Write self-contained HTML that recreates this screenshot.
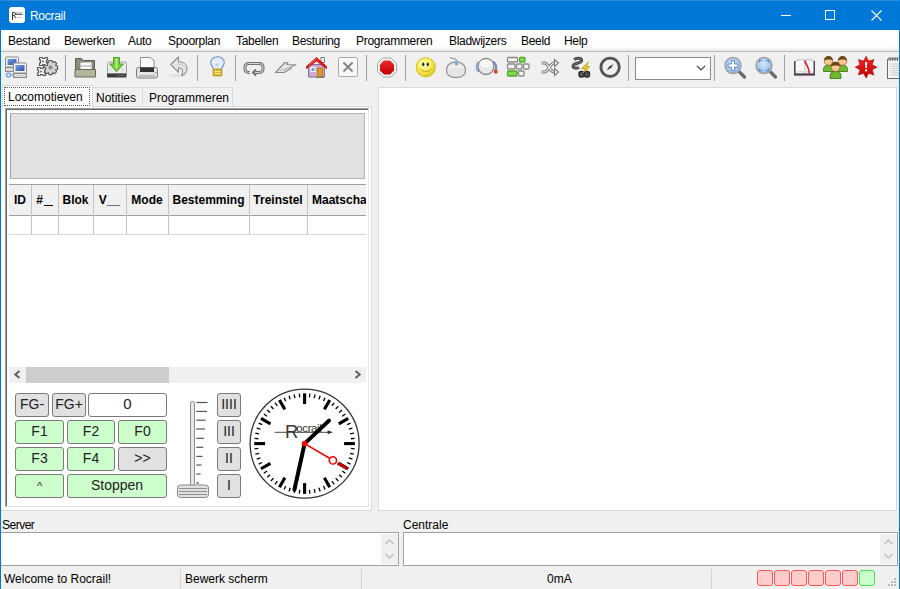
<!DOCTYPE html>
<html><head><meta charset="utf-8">
<style>
*{margin:0;padding:0;box-sizing:border-box}
html,body{width:900px;height:589px;overflow:hidden;background:#f0f0f0;font-family:"Liberation Sans",sans-serif;font-size:12px;color:#000}
.a{position:absolute}
.t{white-space:nowrap}
#title{left:0;top:0;width:900px;height:30px;background:#0078d7}
#menu{left:1px;top:30px;width:898px;height:22px;background:linear-gradient(#fff 0,#fff 17px,#e6e6e6 21px);border-bottom:1px solid #bdbdbd}
#menu span{position:absolute;top:4px;letter-spacing:-0.3px}
.sep{position:absolute;top:55px;width:1px;height:26px;background:#a0a0a0}
.btn{position:absolute;border:1px solid #7a7a7a;border-radius:3px;background:#ccffcc;text-align:center;font-size:14px;color:#222}
.gr{background:#e1e1e1}
.rb{position:absolute;border:1px solid #888;border-radius:3px;background:#e1e1e1}
.led{position:absolute;top:570px;width:16px;height:16px;border-radius:3px;background:#ffcccc;border:1px solid #ff5a5a}
</style></head><body>
<!-- window border -->
<div id="title" class="a">
  <div class="a" style="left:0;top:0;width:900px;height:1px;background:#2a8ad8"></div>
  <div class="a" style="left:9px;top:7px;width:16px;height:16px;background:#fff;border-radius:3px"></div>
  <svg class="a" style="left:9px;top:7px" width="16" height="16"><path d="M3.5 5.5v7.5M3.5 5.5h2c1.3 0 1.3 2.8 0 2.8h-2M5.2 8.3l1.3 2.7" fill="none" stroke="#222" stroke-width="0.9"/><path d="M6.5 6h1.5M8.6 6h1.2M10.3 6h1.2M12 6h1.2M6.5 7.5h7" stroke="#333" stroke-width="0.8"/><path d="M7.5 10.5h5.5" stroke="#aaa" stroke-width="0.6"/></svg>
  <div class="a t" style="left:30px;top:9px;color:#fff;font-size:12px;letter-spacing:-0.3px">Rocrail</div>
  <div class="a" style="left:781px;top:15px;width:10px;height:1px;background:#fff"></div>
  <div class="a" style="left:825px;top:10px;width:10px;height:10px;border:1px solid #fff"></div>
  <svg class="a" style="left:871px;top:10px" width="11" height="11"><path d="M0.5 0.5L10.5 10.5M10.5 0.5L0.5 10.5" stroke="#fff" stroke-width="1.1"/></svg>
</div>
<div id="menu" class="a">
  <span style="left:7px">Bestand</span>
  <span style="left:63px">Bewerken</span>
  <span style="left:127px">Auto</span>
  <span style="left:167px">Spoorplan</span>
  <span style="left:235px">Tabellen</span>
  <span style="left:291px">Besturing</span>
  <span style="left:355px">Programmeren</span>
  <span style="left:448px">Bladwijzers</span>
  <span style="left:520px">Beeld</span>
  <span style="left:563px">Help</span>
</div>
<svg class="a" style="left:0;top:0" width="900" height="90" viewBox="0 0 900 90">
<defs>
<linearGradient id="gscr" x1="0" y1="0" x2="1" y2="1"><stop offset="0" stop-color="#7aa0e0"/><stop offset="1" stop-color="#2850b0"/></linearGradient>
<radialGradient id="gsm" cx="0.4" cy="0.35" r="0.7"><stop offset="0" stop-color="#ffffc0"/><stop offset="0.6" stop-color="#f5e84a"/><stop offset="1" stop-color="#d8c020"/></radialGradient>
<radialGradient id="glens" cx="0.45" cy="0.4" r="0.6"><stop offset="0" stop-color="#d8e8fa"/><stop offset="1" stop-color="#8ab4e8"/></radialGradient>
<linearGradient id="gred" x1="0" y1="0" x2="0" y2="1"><stop offset="0" stop-color="#f02828"/><stop offset="1" stop-color="#c00000"/></linearGradient>
</defs>
<!-- 1 network -->
<rect x="5.5" y="57" width="13" height="10" rx="1" fill="#f4f4f4" stroke="#8a8a8a"/>
<rect x="7.5" y="59" width="9" height="6" fill="url(#gscr)"/>
<rect x="5.5" y="67.5" width="8" height="4" fill="#d8d8d8" stroke="#8a8a8a"/>
<rect x="13.5" y="63" width="13" height="10" rx="1" fill="#f4f4f4" stroke="#8a8a8a"/>
<rect x="15.5" y="65" width="9" height="6" fill="url(#gscr)"/>
<rect x="13.5" y="73.5" width="13" height="4" fill="#d8d8d8" stroke="#8a8a8a"/>
<circle cx="8.5" cy="75" r="2" fill="none" stroke="#7aa8e8" stroke-width="1.5"/>
<path d="M10.5 75H13.5" stroke="#7aa8e8" stroke-width="1.5"/>
<!-- 2 gears -->
<g stroke="#5a5a5a" stroke-width="1.2" stroke-linejoin="round">
<path d="M49 60.5h3l0.6 2 2-1 2 2-1 2 2 0.6v3l-2 0.6 1 2-2 2-2-1-0.6 2h-3l-0.6-2-2 1-2-2 1-2-2-0.6v-3l2-0.6-1-2 2-2 2 1z" fill="#d4d4d4"/>
<path d="M39.5 57.5h3v1h2.5v-1h2.5v2.5h-1v3h1v2.5h-2.5v-1h-2.5v1h-3v-2.5h1v-3h-1z" fill="#f4f4f4"/>
<path d="M37.5 67.5h3v1h2.5v-1h2.5v2.5h-1v3h1v2.5h-2.5v-1h-2.5v1h-3v-2.5h1v-3h-1z" fill="#f4f4f4"/>
</g>
<circle cx="43" cy="61.5" r="1.1" fill="#777"/><circle cx="41" cy="71.5" r="1.1" fill="#777"/><circle cx="50.5" cy="67.5" r="1.7" fill="#999" stroke="#666" stroke-width="0.6"/>
<!-- 3 folder -->
<path d="M75.5 58.5h6l2 2h11v16h-19z" fill="#8c8c7a" stroke="#5e5e50"/>
<rect x="80.5" y="62.5" width="11" height="7" fill="#fafafa"/>
<rect x="81" y="65" width="10" height="2" fill="#d0d0d0"/>
<path d="M75 69.5h20.5v7.5h-20.5z" fill="#b4b49c" stroke="#6a6a5a"/>
<!-- 4 download -->
<path d="M108.5 62h17l1 2.5v9.5h-19v-9.5z" fill="#ececec" stroke="#a0a0a0"/>
<path d="M109 70.5l3-1.5M124 70.5l-3-1.5" stroke="#c8c8c8" stroke-width="0.8"/>
<rect x="107" y="73.5" width="19.5" height="4" rx="0.8" fill="#3c3c3c"/>
<path d="M117 75.5h8" stroke="#777" stroke-width="0.8"/>
<path d="M113.5 57.5h6v6.5h3.8l-6.8 7.8-6.8-7.8h3.8z" fill="#7ad03a" stroke="#4a9a18" stroke-width="0.9"/>
<path d="M116.5 58.5v10" stroke="#c8f4a0" stroke-width="1.5"/>
<!-- 5 printer -->
<path d="M140.5 57.5h10l3.5 3.5v8h-13.5z" fill="#fafafa" stroke="#909090"/>
<rect x="136.5" y="67.5" width="21" height="10.5" rx="2" fill="#e4e4e4" stroke="#7a7a7a"/>
<rect x="140" y="67.5" width="14" height="4.5" fill="#333"/>
<rect x="139" y="75" width="16" height="2.5" fill="#bbb"/>
<rect x="155" y="72" width="1.5" height="1.5" fill="#6c3"/>
<!-- 6 undo -->
<ellipse cx="177" cy="75.5" rx="8" ry="1.8" fill="#000" opacity="0.06"/>
<path d="M170.8 64.5L178.5 57V61.8C184 61.8 187 64.8 187 68.8C187 72 184.8 74.5 181.5 75.5C182.8 73.5 183 71.8 182.3 70C181.5 68.3 180 67.5 178.5 67.8V72.3Z" fill="#e6e6e6" stroke="#8c8c8c" stroke-width="1.1" stroke-linejoin="round"/>
<path d="M175 64.5C179 63.5 183 64 185 68" fill="none" stroke="#d0d0d0" stroke-width="1.2"/>
<!-- 7 bulb -->
<path d="M213.5 69.5c0-2.5-2.8-4-2.8-7a6.8 5.8 0 0 1 13.6 0c0 3-2.8 4.5-2.8 7z" fill="#e4eef9" stroke="#6a90cc" stroke-width="1.1"/>
<path d="M215 66l2.5-2.5v3" fill="none" stroke="#9ab4dc" stroke-width="0.7"/>
<rect x="213" y="69" width="9" height="7" rx="1" fill="#d6b632" stroke="#b09020" stroke-width="0.8"/>
<path d="M214 71.5h7M214 73.5h7" stroke="#f6e8a0" stroke-width="0.8"/>
<!-- 8 loop -->
<path d="M250 72.5h-1.5a3.5 3.5 0 0 1-3.5-3.5v-2a3.5 3.5 0 0 1 3.5-3.5h11a3.5 3.5 0 0 1 3.5 3.5v2a3.5 3.5 0 0 1-3.5 3.5h-4" fill="none" stroke="#707070" stroke-width="3"/>
<path d="M250 72.5h-1.5a3.5 3.5 0 0 1-3.5-3.5v-2a3.5 3.5 0 0 1 3.5-3.5h11a3.5 3.5 0 0 1 3.5 3.5v2a3.5 3.5 0 0 1-3.5 3.5h-4" fill="none" stroke="#d8d8d8" stroke-width="1"/>
<path d="M256 69.5l-3 3 3 3" fill="none" stroke="#707070" stroke-width="2"/>
<!-- 9 plane -->
<path d="M275.5 72.5L285 62.5L288 62.8L287 64.5L296 64.8L290 67.5L291 68.5L284 72.5Z" fill="#e8e8e8" stroke="#8c8c8c" stroke-width="1.2" stroke-linejoin="round"/>
<path d="M279 71L295 65.5M283 70.5l6-2.5" stroke="#b4b4b4" stroke-width="0.8"/>
<!-- 10 house -->
<rect x="321" y="57.5" width="3.5" height="5" fill="#f4f4f4" stroke="#555" stroke-width="0.7"/>
<path d="M308.5 64.5h16v12.5h-16z" fill="#c8aad2" stroke="#8a6aa2"/>
<path d="M306.5 66.5L316.5 57.5L326.5 66.5L326.5 68.5L316.5 61L306.5 68.5Z" fill="#e41c1c" stroke="#c00" stroke-width="0.8" stroke-linejoin="round"/>
<path d="M309 65.5L316.5 59" stroke="#ff8a8a" stroke-width="0.7"/>
<rect x="310.5" y="67" width="5" height="5" fill="#fff"/>
<rect x="311.5" y="68" width="3" height="3" fill="#6aa0e0"/>
<rect x="317.5" y="68" width="5" height="9" fill="#dc9a1c" stroke="#a86a10" stroke-width="0.6"/>
<path d="M316 77.5h8" stroke="#777" stroke-width="1"/>
<!-- 11 x box -->
<rect x="338.5" y="57.5" width="19" height="19" rx="2" fill="#f8f8f8" stroke="#a8a8a8"/>
<path d="M343.5 62.5l9 9M352.5 62.5l-9 9" stroke="#888" stroke-width="2"/>
<!-- 12 stop -->
<path d="M383 58h8l5.5 5.5v8l-5.5 5.5h-8l-5.5-5.5v-8z" fill="#f4f4f4" stroke="#a8a8a8"/>
<path d="M384 60.5h6l4 4v6l-4 4h-6l-4-4v-6z" fill="url(#gred)"/>
<!-- 13 smiley -->
<circle cx="425.8" cy="67.3" r="9.6" fill="url(#gsm)" stroke="#d4c020"/>
<ellipse cx="423.3" cy="64.3" rx="1.1" ry="1.9" fill="#222"/><ellipse cx="427.7" cy="64.3" rx="1.1" ry="1.9" fill="#222"/>
<path d="M420 68.5c3 4 9 4 11.5 0" fill="none" stroke="#c0a810" stroke-width="1"/>
<!-- 14 mouse -->
<path d="M446.5 70.5C446.5 64.5 451 62 456 62C461 62 465.5 64.5 465.5 70.5C465.5 75 462 77.5 456 77.5C450 77.5 446.5 75 446.5 70.5Z" fill="#e6e6e6" stroke="#9a9a9a" stroke-width="1.3"/>
<path d="M448.5 67.5c4 -1.5 11 -1.5 15 0" fill="none" stroke="#fafafa" stroke-width="1.2"/>
<path d="M450 57c0 2 6 1 6.5 3" fill="none" stroke="#777" stroke-width="0.9"/>
<rect x="455" y="60" width="3" height="5.5" rx="1.5" fill="#7aaae0"/>
<!-- 15 knob -->
<path d="M478.5 72a9 8 0 0 1 0-10" fill="none" stroke="#8aaad8" stroke-width="2"/>
<path d="M493 61.5a9 8 0 0 1 2.5 9" fill="none" stroke="#6a8ac0" stroke-width="2.2"/>
<circle cx="486" cy="66.5" r="8" fill="#e8e8e8" stroke="#858585" stroke-width="1.3"/>
<ellipse cx="486" cy="63.5" rx="6.5" ry="4" fill="#f8f8f8"/>
<rect x="494" y="70" width="3.5" height="3.5" fill="#e84020"/>
<!-- 16 blocks -->
<g stroke="#8a8a8a" stroke-width="1.3" fill="#f4f4f4">
<rect x="507.5" y="57.5" width="10" height="4.5" rx="1"/>
<rect x="507.5" y="64" width="7.5" height="5" rx="1"/>
<rect x="516.5" y="64" width="5.5" height="5" rx="1"/>
<rect x="523.5" y="64" width="5.5" height="5" rx="1"/>
<rect x="518.5" y="71" width="5.5" height="5" rx="1"/>
</g>
<rect x="519.5" y="57.5" width="5.5" height="4.5" rx="1" fill="#80dc50" stroke="#50a828" stroke-width="1.3"/>
<rect x="507.5" y="71" width="9.5" height="5" rx="1" fill="#80dc50" stroke="#50a828" stroke-width="1.3"/>
<!-- 17 shuffle -->
<path d="M541.5 63h3c4 0 5.5 9 9.5 9h2M541.5 72h3c4 0 5.5-9 9.5-9h2" fill="none" stroke="#7a7a7a" stroke-width="3.2"/>
<path d="M541.5 63h3c4 0 5.5 9 9.5 9h2M541.5 72h3c4 0 5.5-9 9.5-9h2" fill="none" stroke="#f2f2f2" stroke-width="1.1"/>
<path d="M554.5 59.5l4 3.5-4 3.5zM554.5 68.5l4 3.5-4 3.5z" fill="#f2f2f2" stroke="#7a7a7a" stroke-width="1.1"/>
<!-- 18 chain -->
<path d="M574 59.5c4-2.5 8.5-1 7.5 1.5c-1 2.5-8.5 2-8.5 5c0 2.5 4 2.5 6 1.5" fill="none" stroke="#3c3c3c" stroke-width="3"/>
<path d="M574 59.5c4-2.5 8.5-1 7.5 1.5c-1 2.5-8.5 2-8.5 5c0 2.5 4 2.5 6 1.5" fill="none" stroke="#8a8a8a" stroke-width="0.8"/>
<rect x="579" y="71.5" width="5" height="5.5" rx="2" fill="#555" stroke="#2a2a2a" stroke-width="1.4"/>
<rect x="584.5" y="71.5" width="5" height="5.5" rx="2" fill="#555" stroke="#2a2a2a" stroke-width="1.4"/>
<path d="M588.5 62l-7 6.5h3.8l-2.3 4.5 7-6.5h-3.8z" fill="#f2d020" stroke="#b89010" stroke-width="0.7"/>
<!-- 19 compass -->
<circle cx="610.1" cy="67.3" r="9.2" fill="#f0f0f0" stroke="#555" stroke-width="2.8"/>
<path d="M613.5 64l-2.5 4.3-1.8-1.8zM606.7 70.6l2.5-4.3 1.8 1.8z" fill="#444"/>
<!-- 20 zoom in -->
<path d="M739 71.5l5.5 5.5" stroke="#6a6a6a" stroke-width="3.2" stroke-linecap="round"/>
<circle cx="733" cy="65.5" r="8" fill="url(#glens)" stroke="#a0a0a0" stroke-width="1.4"/>
<path d="M731.5 60.5h3v3.5h3.5v3h-3.5v3.5h-3v-3.5h-3.5v-3h3.5z" fill="#fff" stroke="#4a7ac8" stroke-width="0.8"/>
<!-- 21 zoom fit -->
<path d="M770 71.5l5.5 5.5" stroke="#6a6a6a" stroke-width="3.2" stroke-linecap="round"/>
<circle cx="764" cy="65.5" r="8" fill="url(#glens)" stroke="#a0a0a0" stroke-width="1.4"/>
<path d="M759.5 62.5v-2h2.5M766 60.5h2.5v2M768.5 68.5v2h-2.5M762 70.5h-2.5v-2" fill="none" stroke="#5a8ad0" stroke-width="1.1"/>
<!-- 22 book -->
<path d="M795.5 73.5V61.5C798 59.3 802.5 59 805 60.5C807.5 59 812 59.3 814 61.5V73.5Z" fill="#f8f8f8" stroke="#a8a8a8" stroke-width="0.8"/>
<path d="M805 60.5V73" stroke="#c8c8c8" stroke-width="1"/>
<path d="M796.5 72.5c3-1.2 6-1.2 8.5 0c2.5-1.2 5.5-1.2 8.5 0" fill="none" stroke="#bbb" stroke-width="0.7"/>
<path d="M794.7 61v14M814.3 61v14" stroke="#4a3a52" stroke-width="1.3"/>
<rect x="794" y="73.6" width="21" height="2" fill="#4a3a52"/>
<path d="M804.8 60.5C805.5 64.5 809.5 67 809.3 73.5" fill="none" stroke="#d42424" stroke-width="1.7"/>
<!-- 23 people -->
<g>
<path d="M823.5 69.5c0-3 2-4.5 5-4.5s5 1.5 5 4.5v2h-10z" fill="#70b830" stroke="#3a7010" stroke-width="0.8"/>
<path d="M837.5 69.5c0-3 2-4.5 5-4.5s5 1.5 5 4.5v2h-10z" fill="#70b830" stroke="#3a7010" stroke-width="0.8"/>
<circle cx="828.5" cy="61" r="4.3" fill="#f8c890" stroke="#8a5a20" stroke-width="0.7"/>
<path d="M824.2 60.5c0-3 2-4.5 4.3-4.5s4.3 1.5 4.3 4.5c-2-1.5-6-1.5-8.6 0z" fill="#6a4518"/>
<circle cx="842.5" cy="61" r="4.3" fill="#f8c890" stroke="#8a5a20" stroke-width="0.7"/>
<path d="M838.2 60.5c0-3 2-4.5 4.3-4.5s4.3 1.5 4.3 4.5c-2-1.5-6-1.5-8.6 0z" fill="#6a4518"/>
<path d="M830 76c0-3.5 2.5-5 5.5-5s5.5 1.5 5.5 5v2.5h-11z" fill="#70b830" stroke="#3a7010" stroke-width="0.8"/>
<circle cx="835.5" cy="67" r="4.5" fill="#f8c890" stroke="#8a5a20" stroke-width="0.7"/>
<path d="M831 66.5c0-3 2-4.8 4.5-4.8s4.5 1.8 4.5 4.8c-2-1.5-6.5-1.5-9 0z" fill="#6a4518"/>
</g>
<!-- 24 burst -->
<path d="M866.10 56.30L868.63 61.10L873.81 59.49L872.20 64.67L877.00 67.20L872.20 69.73L873.81 74.91L868.63 73.30L866.10 78.10L863.57 73.30L858.39 74.91L860.00 69.73L855.20 67.20L860.00 64.67L858.39 59.49L863.57 61.10Z" fill="url(#gred)" stroke="#b00000" stroke-width="0.6"/>
<path d="M865 62h2.2l-0.4 6h-1.4z" fill="#fff"/>
<rect x="865.1" y="69.4" width="2" height="2" fill="#fff"/>
<!-- 25 notepad -->
<rect x="887.5" y="59.5" width="14" height="19" fill="#f6f6f6" stroke="#6a6a6a"/>
<rect x="888" y="57" width="12" height="3.5" fill="#d8d8d8"/>
<path d="M889 57.5v3M890.7 57.5v3M892.4 57.5v3M894.1 57.5v3M895.8 57.5v3M897.5 57.5v3" stroke="#333" stroke-width="0.8"/>
<path d="M890 63.5v12" stroke="#aaa" stroke-width="0.7" stroke-dasharray="1 1"/>
<path d="M891.5 64h8M891.5 66.2h8M891.5 68.4h8M891.5 70.6h8M891.5 72.8h8M891.5 75h8" stroke="#bcbcbc" stroke-width="0.8"/>
</svg>

<!-- toolbar separators -->
<div class="sep" style="left:65px"></div>
<div class="sep" style="left:197px"></div>
<div class="sep" style="left:235px"></div>
<div class="sep" style="left:366px"></div>
<div class="sep" style="left:405px"></div>
<div class="sep" style="left:628px"></div>
<div class="sep" style="left:714px"></div>
<div class="sep" style="left:784px"></div>
<!-- combo -->
<div class="a" style="left:635px;top:57px;width:76px;height:23px;background:#fff;border:1px solid #8a8a8a"></div>
<svg class="a" style="left:696px;top:65px" width="10" height="6"><path d="M1 1L5 5L9 1" stroke="#444" fill="none" stroke-width="1.2"/></svg>

<!-- tabs -->
<div class="a" style="left:91px;top:87px;width:52px;height:21px;background:#f0f0f0;border:1px solid #dadada;border-bottom:none"></div>
<div class="a t" style="left:96px;top:91px">Notities</div>
<div class="a" style="left:142px;top:87px;width:91px;height:21px;background:#f0f0f0;border:1px solid #dadada;border-bottom:none"></div>
<div class="a t" style="left:149px;top:91px">Programmeren</div>
<!-- left panel page -->
<div class="a" style="left:1px;top:106px;width:371px;height:405px;background:#fff;border:1px solid #dadada;border-left:none"></div>
<div class="a" style="left:5px;top:108px;width:364px;height:399px;background:#fff;border-left:1px solid #a0a0a0;border-top:1px solid #a0a0a0;border-right:1px solid #e3e3e3;border-bottom:1px solid #e3e3e3"></div>
<div class="a" style="left:6px;top:109px;width:1px;height:397px;background:#696969"></div>
<div class="a" style="left:6px;top:109px;width:362px;height:1px;background:#696969"></div>
<div class="a" style="left:2px;top:85px;width:91px;height:23px;background:#fff;border:1px solid #dadada;border-bottom:none"></div>
<div class="a" style="left:4px;top:87px;width:86px;height:19px;border:1px dotted #555"></div>
<div class="a t" style="left:8px;top:90px">Locomotieven</div>
<!-- image area -->
<div class="a" style="left:10px;top:113px;width:355px;height:66px;background:#e1e1e1;border:1px solid #b4b4b4;border-left-color:#a0a0a0"></div>
<!-- grid -->
<div class="a" style="left:9px;top:184px;width:357px;height:32px;background:#f0f0f0;border-top:1px solid #a0a0a0;border-bottom:1px solid #a0a0a0"></div>
<div class="a" style="left:9px;top:234px;width:357px;height:1px;background:#d6d6d6"></div>
<div class="a" style="left:9px;top:185px;width:357px;height:30px;overflow:hidden">
<div class="a t" style="left:0px;top:8px;width:22px;text-align:center;font-weight:bold">ID</div>
<div class="a t" style="left:22px;top:8px;width:27px;text-align:center;font-weight:bold">#<span style="display:inline-block;width:9px;height:1.5px;background:#000;vertical-align:-2px;margin-left:1px"></span></div>
<div class="a t" style="left:49px;top:8px;width:35px;text-align:center;font-weight:bold">Blok</div>
<div class="a t" style="left:84px;top:8px;width:33px;text-align:center;font-weight:bold">V__</div>
<div class="a t" style="left:117px;top:8px;width:42px;text-align:center;font-weight:bold">Mode</div>
<div class="a t" style="left:159px;top:8px;width:81px;text-align:center;font-weight:bold">Bestemming</div>
<div class="a t" style="left:240px;top:8px;width:58px;text-align:center;font-weight:bold">Treinstel</div>
<div class="a t" style="left:303px;top:8px;font-weight:bold">Maatschappij</div>
</div>
<div class="a" style="left:31px;top:185px;width:1px;height:49px;background:#c4c4c4"></div>
<div class="a" style="left:58px;top:185px;width:1px;height:49px;background:#c4c4c4"></div>
<div class="a" style="left:93px;top:185px;width:1px;height:49px;background:#c4c4c4"></div>
<div class="a" style="left:126px;top:185px;width:1px;height:49px;background:#c4c4c4"></div>
<div class="a" style="left:168px;top:185px;width:1px;height:49px;background:#c4c4c4"></div>
<div class="a" style="left:249px;top:185px;width:1px;height:49px;background:#c4c4c4"></div>
<div class="a" style="left:307px;top:185px;width:1px;height:49px;background:#c4c4c4"></div>
<!-- scrollbar -->
<div class="a" style="left:9px;top:367px;width:357px;height:16px;background:#f0f0f0"></div>
<div class="a" style="left:26px;top:367px;width:143px;height:16px;background:#cdcdcd"></div>
<svg class="a" style="left:9px;top:367px" width="357" height="16"><path d="M10.5 4L6.3 7.5L10.5 11" fill="none" stroke="#606060" stroke-width="2"/><path d="M346.5 4L350.7 7.5L346.5 11" fill="none" stroke="#606060" stroke-width="2"/></svg>
<!-- buttons -->
<div class="btn gr" style="left:15px;top:393px;width:34px;height:24px;line-height:20px">FG-</div>
<div class="btn gr" style="left:52px;top:393px;width:34px;height:24px;line-height:20px">FG+</div>
<div class="btn" style="left:88px;top:393px;width:79px;height:24px;line-height:20px;background:#fff;font-size:15px">0</div>
<div class="btn" style="left:15px;top:420px;width:49px;height:24px;line-height:20px">F1</div>
<div class="btn" style="left:67px;top:420px;width:48px;height:24px;line-height:20px">F2</div>
<div class="btn" style="left:118px;top:420px;width:49px;height:24px;line-height:20px">F0</div>
<div class="btn" style="left:15px;top:447px;width:49px;height:24px;line-height:20px">F3</div>
<div class="btn" style="left:67px;top:447px;width:48px;height:24px;line-height:20px">F4</div>
<div class="btn gr" style="left:118px;top:447px;width:49px;height:24px;line-height:20px">&gt;&gt;</div>
<div class="btn" style="left:15px;top:474px;width:49px;height:24px;line-height:23px;font-size:11px">^</div>
<div class="btn" style="left:67px;top:474px;width:100px;height:24px;line-height:20px">Stoppen</div>
<!-- mode buttons -->
<div class="btn gr" style="left:217px;top:393px;width:24px;height:24px;line-height:20px">IIII</div>
<div class="btn gr" style="left:217px;top:420px;width:24px;height:24px;line-height:20px">III</div>
<div class="btn gr" style="left:217px;top:447px;width:24px;height:24px;line-height:20px">II</div>
<div class="btn gr" style="left:217px;top:474px;width:24px;height:24px;line-height:20px">I</div>
<!-- slider -->
<svg class="a" style="left:170px;top:395px" width="50" height="106">
<rect x="20.5" y="6.5" width="4" height="84" rx="2" fill="#e8e8e8" stroke="#8a8a8a"/>
<path d="M26.3 7.5H37.5" stroke="#555" stroke-width="1.2"/>
<path d="M26.3 16.4H37.0" stroke="#555" stroke-width="1.2"/>
<path d="M26.3 25.2H35.6" stroke="#555" stroke-width="1.2"/>
<path d="M26.3 34.0H35.0" stroke="#555" stroke-width="1.2"/>
<path d="M26.3 43.3H34.0" stroke="#555" stroke-width="1.2"/>
<path d="M26.3 52.3H33.3" stroke="#555" stroke-width="1.2"/>
<path d="M26.3 61.4H32.5" stroke="#555" stroke-width="1.2"/>
<path d="M26.3 70.0H31.5" stroke="#555" stroke-width="1.2"/>
<path d="M26.3 79.0H30.5" stroke="#555" stroke-width="1.2"/>
<path d="M26.3 88.0H29.0" stroke="#555" stroke-width="1.2"/>
<rect x="7.5" y="90" width="31" height="12.5" rx="3" fill="#e0e0e0" stroke="#8a8a8a"/>
<path d="M9 93.5h28M9 96.5h28M9 99.5h28" stroke="#888" stroke-width="0.9"/>
</svg>
<!-- clock -->
<svg class="a" style="left:245px;top:385px" width="120" height="120">
<g transform="translate(59.6 58.6)">
<circle r="54.5" fill="#fff" stroke="#333" stroke-width="1.3"/>
<path d="M0.00 -39.50L0.00 -50.30" stroke="#000" stroke-width="3.1"/>
<path d="M4.86 -46.25L5.26 -50.02" stroke="#000" stroke-width="1.3"/>
<path d="M9.67 -45.48L10.46 -49.20" stroke="#000" stroke-width="1.3"/>
<path d="M14.37 -44.22L15.54 -47.84" stroke="#000" stroke-width="1.3"/>
<path d="M18.91 -42.48L20.46 -45.95" stroke="#000" stroke-width="1.3"/>
<path d="M19.75 -34.21L25.15 -43.56" stroke="#000" stroke-width="3.1"/>
<path d="M27.33 -37.62L29.57 -40.69" stroke="#000" stroke-width="1.3"/>
<path d="M31.11 -34.56L33.66 -37.38" stroke="#000" stroke-width="1.3"/>
<path d="M34.56 -31.11L37.38 -33.66" stroke="#000" stroke-width="1.3"/>
<path d="M37.62 -27.33L40.69 -29.57" stroke="#000" stroke-width="1.3"/>
<path d="M34.21 -19.75L43.56 -25.15" stroke="#000" stroke-width="3.1"/>
<path d="M42.48 -18.91L45.95 -20.46" stroke="#000" stroke-width="1.3"/>
<path d="M44.22 -14.37L47.84 -15.54" stroke="#000" stroke-width="1.3"/>
<path d="M45.48 -9.67L49.20 -10.46" stroke="#000" stroke-width="1.3"/>
<path d="M46.25 -4.86L50.02 -5.26" stroke="#000" stroke-width="1.3"/>
<path d="M39.50 -0.00L50.30 -0.00" stroke="#000" stroke-width="3.1"/>
<path d="M46.25 4.86L50.02 5.26" stroke="#000" stroke-width="1.3"/>
<path d="M45.48 9.67L49.20 10.46" stroke="#000" stroke-width="1.3"/>
<path d="M44.22 14.37L47.84 15.54" stroke="#000" stroke-width="1.3"/>
<path d="M42.48 18.91L45.95 20.46" stroke="#000" stroke-width="1.3"/>
<path d="M34.21 19.75L43.56 25.15" stroke="#000" stroke-width="3.1"/>
<path d="M37.62 27.33L40.69 29.57" stroke="#000" stroke-width="1.3"/>
<path d="M34.56 31.11L37.38 33.66" stroke="#000" stroke-width="1.3"/>
<path d="M31.11 34.56L33.66 37.38" stroke="#000" stroke-width="1.3"/>
<path d="M27.33 37.62L29.57 40.69" stroke="#000" stroke-width="1.3"/>
<path d="M19.75 34.21L25.15 43.56" stroke="#000" stroke-width="3.1"/>
<path d="M18.91 42.48L20.46 45.95" stroke="#000" stroke-width="1.3"/>
<path d="M14.37 44.22L15.54 47.84" stroke="#000" stroke-width="1.3"/>
<path d="M9.67 45.48L10.46 49.20" stroke="#000" stroke-width="1.3"/>
<path d="M4.86 46.25L5.26 50.02" stroke="#000" stroke-width="1.3"/>
<path d="M0.00 39.50L0.00 50.30" stroke="#000" stroke-width="3.1"/>
<path d="M-4.86 46.25L-5.26 50.02" stroke="#000" stroke-width="1.3"/>
<path d="M-9.67 45.48L-10.46 49.20" stroke="#000" stroke-width="1.3"/>
<path d="M-14.37 44.22L-15.54 47.84" stroke="#000" stroke-width="1.3"/>
<path d="M-18.91 42.48L-20.46 45.95" stroke="#000" stroke-width="1.3"/>
<path d="M-19.75 34.21L-25.15 43.56" stroke="#000" stroke-width="3.1"/>
<path d="M-27.33 37.62L-29.57 40.69" stroke="#000" stroke-width="1.3"/>
<path d="M-31.11 34.56L-33.66 37.38" stroke="#000" stroke-width="1.3"/>
<path d="M-34.56 31.11L-37.38 33.66" stroke="#000" stroke-width="1.3"/>
<path d="M-37.62 27.33L-40.69 29.57" stroke="#000" stroke-width="1.3"/>
<path d="M-34.21 19.75L-43.56 25.15" stroke="#000" stroke-width="3.1"/>
<path d="M-42.48 18.91L-45.95 20.46" stroke="#000" stroke-width="1.3"/>
<path d="M-44.22 14.37L-47.84 15.54" stroke="#000" stroke-width="1.3"/>
<path d="M-45.48 9.67L-49.20 10.46" stroke="#000" stroke-width="1.3"/>
<path d="M-46.25 4.86L-50.02 5.26" stroke="#000" stroke-width="1.3"/>
<path d="M-39.50 0.00L-50.30 0.00" stroke="#000" stroke-width="3.1"/>
<path d="M-46.25 -4.86L-50.02 -5.26" stroke="#000" stroke-width="1.3"/>
<path d="M-45.48 -9.67L-49.20 -10.46" stroke="#000" stroke-width="1.3"/>
<path d="M-44.22 -14.37L-47.84 -15.54" stroke="#000" stroke-width="1.3"/>
<path d="M-42.48 -18.91L-45.95 -20.46" stroke="#000" stroke-width="1.3"/>
<path d="M-34.21 -19.75L-43.56 -25.15" stroke="#000" stroke-width="3.1"/>
<path d="M-37.62 -27.33L-40.69 -29.57" stroke="#000" stroke-width="1.3"/>
<path d="M-34.56 -31.11L-37.38 -33.66" stroke="#000" stroke-width="1.3"/>
<path d="M-31.11 -34.56L-33.66 -37.38" stroke="#000" stroke-width="1.3"/>
<path d="M-27.33 -37.62L-29.57 -40.69" stroke="#000" stroke-width="1.3"/>
<path d="M-19.75 -34.21L-25.15 -43.56" stroke="#000" stroke-width="3.1"/>
<path d="M-18.91 -42.48L-20.46 -45.95" stroke="#000" stroke-width="1.3"/>
<path d="M-14.37 -44.22L-15.54 -47.84" stroke="#000" stroke-width="1.3"/>
<path d="M-9.67 -45.48L-10.46 -49.20" stroke="#000" stroke-width="1.3"/>
<path d="M-4.86 -46.25L-5.26 -50.02" stroke="#000" stroke-width="1.3"/>
<text x="-19.6" y="-5.5" font-family="Liberation Sans" font-size="18.5" fill="#3a3a3a">R</text>
<text x="-8.3" y="-11.8" font-family="Liberation Sans" font-size="11.5" letter-spacing="-0.4" fill="#333">ocrail</text>
<path d="M-30 -11.3H27" stroke="#333" stroke-width="0.9"/><path d="M23 -13.3L28 -11.3L23 -9.3z" fill="#333"/>
<path d="M0 0L24.4 -23" stroke="#000" stroke-width="4" stroke-linecap="round"/>
<path d="M0 0L-10.2 46.2" stroke="#000" stroke-width="4" stroke-linecap="round"/>
<path d="M0 0L25 14.6" stroke="#f00" stroke-width="1.6"/>
<path d="M33 19.7L42.5 25" stroke="#c00" stroke-width="3"/>
<circle cx="28.3" cy="16.8" r="3.6" fill="#fff" stroke="#f00" stroke-width="1.6"/>
<circle r="2.8" fill="#f00"/>
</g>
</svg>
<!-- right panel -->
<div class="a" style="left:378px;top:87px;width:519px;height:424px;background:#fff;border:1px solid #dadada"></div>

<!-- bottom labels -->
<div class="a t" style="left:2px;top:518px;letter-spacing:-0.5px">Server</div>
<div class="a" style="left:1px;top:532px;width:398px;height:34px;background:#fff;border:1px solid #a0a0a0;border-left:none"></div>
<div class="a" style="left:381px;top:534px;width:17px;height:30px;background:#f0f0f0"></div>
<svg class="a" style="left:381px;top:534px" width="17" height="30"><path d="M4.5 10L8.5 6L12.5 10M4.5 20L8.5 24L12.5 20" fill="none" stroke="#c0c0c0" stroke-width="1.5"/></svg>
<div class="a t" style="left:403px;top:518px">Centrale</div>
<div class="a" style="left:403px;top:532px;width:495px;height:34px;background:#fff;border:1px solid #a0a0a0"></div>
<div class="a" style="left:880px;top:534px;width:17px;height:30px;background:#f0f0f0"></div>
<svg class="a" style="left:880px;top:534px" width="17" height="30"><path d="M4.5 10L8.5 6L12.5 10M4.5 20L8.5 24L12.5 20" fill="none" stroke="#c0c0c0" stroke-width="1.5"/></svg>

<!-- status bar -->
<div class="a t" style="left:4px;top:572px">Welcome to Rocrail!</div>
<div class="a" style="left:180px;top:569px;width:1px;height:20px;background:#d4d4d4"></div>
<div class="a t" style="left:185px;top:572px">Bewerk scherm</div>
<div class="a" style="left:361px;top:569px;width:1px;height:20px;background:#d4d4d4"></div>
<div class="a t" style="left:547px;top:572px">0mA</div>
<div class="a" style="left:711px;top:569px;width:1px;height:20px;background:#d4d4d4"></div>
<div class="led" style="left:757px"></div>
<div class="led" style="left:774px"></div>
<div class="led" style="left:791px"></div>
<div class="led" style="left:808px"></div>
<div class="led" style="left:825px"></div>
<div class="led" style="left:842px"></div>
<div class="led" style="left:859px;background:#ccffcc;border-color:#4ddf4d"></div>
<svg class="a" style="left:886px;top:576px" width="12" height="12"><g fill="#b8b8b8"><rect x="8" y="2" width="2" height="2"/><rect x="5" y="5" width="2" height="2"/><rect x="8" y="5" width="2" height="2"/><rect x="2" y="8" width="2" height="2"/><rect x="5" y="8" width="2" height="2"/><rect x="8" y="8" width="2" height="2"/></g></svg>
<div class="a" style="left:0;top:0;width:1px;height:589px;background:#0078d7"></div>
<div class="a" style="left:899px;top:0;width:1px;height:589px;background:#0078d7"></div>
</body></html>
